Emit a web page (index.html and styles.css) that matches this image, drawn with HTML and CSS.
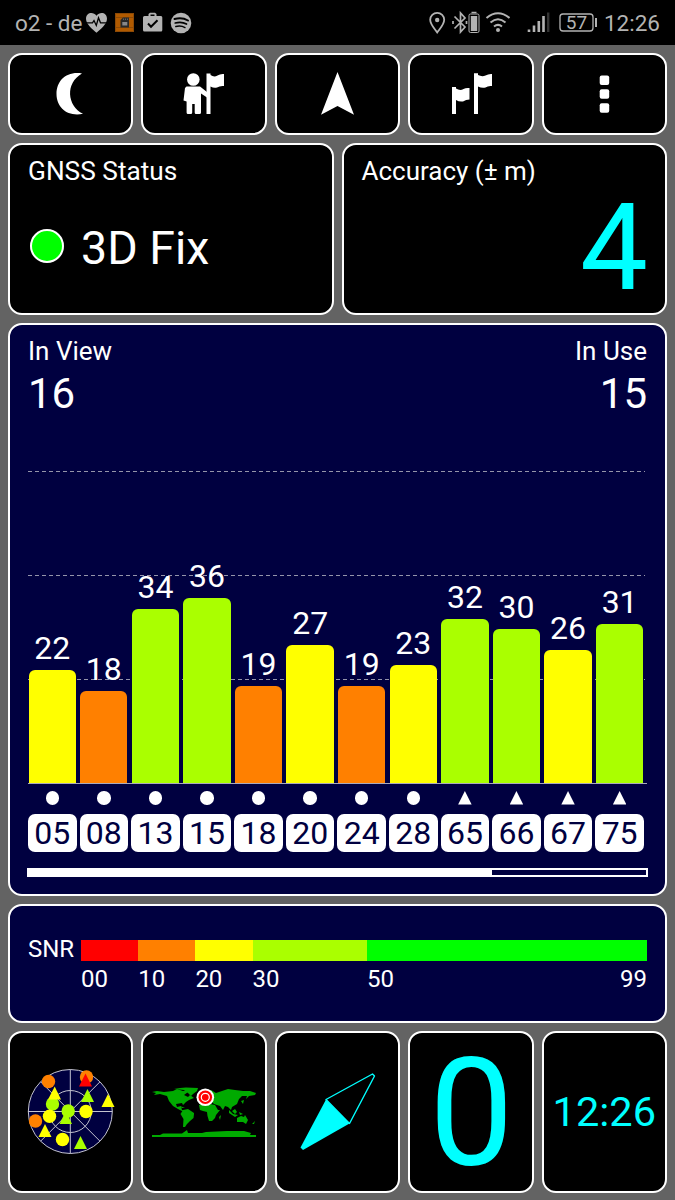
FILE: index.html
```html
<!DOCTYPE html>
<html lang="en">
<head>
<meta charset="utf-8">
<title>GNSS Status</title>
<link rel="stylesheet" href="styles.css">
</head>
<body>
<header class="status">
  <span class="carrier">o2 - de</span>
  <svg class="status-left" width="110" height="28" viewBox="0 0 110 28" fill="#b3b3b3">
    <path d="M10.5 23.800C7 20.500 0 15.500 0 9.800C0 3.500 7.200 2.300 10.500 6.800C13.800 2.300 21 3.500 21 9.800C21 15.500 14 20.500 10.500 23.800Z"/>
    <path d="M0 13.800H6.500L8 11.500L10.300 16.500L12.500 8.800L14.500 13.800H21" fill="none" stroke="#000" stroke-width="1.300"/>
    <rect x="29.500" y="4.500" width="18" height="18" fill="#b05a00" stroke="#8d4a06"/>
    <path d="M29 8.500H48M29 18.500H48" stroke="#8d4a06"/>
    <path d="M34.500 11L37 8.500H43V18.500H34.500Z" fill="#292929"/>
    <path d="M37.500 9.500V11M39.500 9.500V11M41.500 9.500V11" stroke="#777" stroke-width=".7"/>
    <rect x="36.300" y="13" width="5" height="3.500" fill="#888"/>
    <path fill-rule="evenodd" d="M57 8.500Q57 7 58.500 7H62.500V5L64 3.800H69L70.500 5V7H75Q76.300 7 76.300 8.500V21Q76.300 22.500 75 22.500H58.500Q57 22.500 57 21ZM64.500 5.500V7H68.500V5.500Z"/>
    <path d="M62 14.500L65 17.700L71.500 11.200" fill="none" stroke="#000" stroke-width="2"/>
    <circle cx="95" cy="14" r="10.300"/>
    <g fill="none" stroke="#000" stroke-linecap="round"><path d="M88.500 10Q96 7.800 102 11.500" stroke-width="2"/><path d="M89.200 14Q95.500 12.200 100.500 15" stroke-width="1.700"/><path d="M89.800 17.500Q95 16.200 99 18.600" stroke-width="1.400"/></g>
  </svg>
  <svg class="status-right" width="175" height="28" viewBox="0 0 175 28" fill="none" stroke="#b3b3b3">
    <path d="M8.200 23.500C5.500 19.500 1.200 15.500 1.200 10.800A7 7 0 0 1 15.200 10.800C15.200 15.500 11 19.500 8.200 23.500Z" stroke-width="1.800"/>
    <circle cx="8.200" cy="11" r="2.200" fill="#b3b3b3" stroke="none"/>
    <path d="M25.500 7.500L36 18L31.500 23V4L36 9L25.500 19.500M24 12V15M37.500 12V15" stroke-width="1.700"/>
    <rect x="40" y="5" width="10" height="18.500" rx="1.500"/><path d="M42.500 3.500H47.500" stroke-width="1.500"/><rect x="41.800" y="7" width="6.400" height="15" fill="#b3b3b3" stroke="none"/>
    <path d="M57.500 9Q69 -.5 80.500 9M61.500 13.500Q69 7 76.500 13.500M65 17.500Q69 14.300 73 17.500" stroke-width="2"/><circle cx="69" cy="21" r="2" fill="#b3b3b3" stroke="none"/>
    <path d="M100 20.500V23M105 16.500V23M109.800 12V23M114.500 7V23" stroke-width="2.600"/><path d="M119.200 3.500V23" stroke-width="2.400" stroke="#333"/>
    <rect x="131" y="5" width="33" height="17" rx="3" stroke-width="1.300"/><path d="M167 9V18" stroke-width="2"/>
    <text x="147.500" y="20" class="battery">57</text>
  </svg>
  <span class="clock">12:26</span>
</header>
<main class="app">
  <nav class="row toolbar">
    <div class="card"><svg width="125" height="82" viewBox="8 53 125 82"><path d="M82 73.500C66 71 56.500 81 56.500 94C56.500 108 68 117 83 113.800C67 106 65 83 82 73.500Z"/></svg></div>
    <div class="card"><svg width="125" height="82" viewBox="141 53 125 82"><circle cx="193.300" cy="79.500" r="6.300"/><path d="M186.500 86.500H200L207 92V97.500L201 93.500V112.500Q201 114 199.500 114H196Q194.700 114 194.700 112.500V104H192.200V112.500Q192.200 114 190.800 114H188Q186.600 114 186.600 112.500V101.500L183.500 100.500L185 88Z"/><path d="M206.500 73.500H210.500V75Q214 77.500 217.500 75.500Q220.500 73.500 224 74V86Q220 85.500 217 87.500Q214 88.500 210.500 86.500V114H206.500Z"/></svg></div>
    <div class="card"><svg width="125" height="82" viewBox="275 53 125 82"><path d="M337.500 72L354 114.800L337.500 106L321 114.800Z"/></svg></div>
    <div class="card"><svg width="125" height="82" viewBox="408 53 125 82"><path d="M452 87H456V88.500Q460 91 463.500 89Q466 87.500 469.500 88V99.500Q466 99.500 463 101.500Q459 102 456 100V114H452ZM474 73.200H478V75Q482 77 485.500 75.500Q488.500 73.700 492 74V86Q488 85.500 485.500 87.500Q482 88.500 478 86.500V114H474Z"/></svg></div>
    <div class="card"><svg width="125" height="82" viewBox="542 53 125 82"><rect x="599.700" y="75.500" width="9.500" height="9.500" rx="2"/><rect x="599.700" y="89.300" width="9.500" height="9.500" rx="2"/><rect x="599.700" y="103.300" width="9.500" height="9.500" rx="2"/></svg></div>
  </nav>
  <section class="row summary">
    <div class="card"><h2 class="wide">GNSS Status</h2><div class="fix"><i class="lamp"></i><span>3D Fix</span></div></div>
    <div class="card"><h2>Accuracy (± m)</h2><div class="accuracy">4</div></div>
  </section>
  <section class="card satellites">
    <div class="counts"><div><h2>In View</h2><b>16</b></div><div class="right"><h2>In Use</h2><b>15</b></div></div>
    <div class="chart">
      <svg class="grid" width="619" height="314" viewBox="0 0 619 314"><path d="M0 1.500H617M0 105.500H617M0 209.500H617"/></svg>
      <div class="col"><span>22</span><i class="bar yellow" style="height:112.300px"></i></div>
      <div class="col"><span>18</span><i class="bar orange" style="height:91.700px"></i></div>
      <div class="col"><span>34</span><i class="bar lime" style="height:173.800px"></i></div>
      <div class="col"><span>36</span><i class="bar lime" style="height:184.100px"></i></div>
      <div class="col"><span>19</span><i class="bar orange" style="height:96.800px"></i></div>
      <div class="col"><span>27</span><i class="bar yellow" style="height:137.900px"></i></div>
      <div class="col"><span>19</span><i class="bar orange" style="height:96.800px"></i></div>
      <div class="col"><span>23</span><i class="bar yellow" style="height:117.300px"></i></div>
      <div class="col"><span>32</span><i class="bar lime" style="height:163.600px"></i></div>
      <div class="col"><span>30</span><i class="bar lime" style="height:153.300px"></i></div>
      <div class="col"><span>26</span><i class="bar yellow" style="height:132.800px"></i></div>
      <div class="col"><span>31</span><i class="bar lime" style="height:158.500px"></i></div>
    </div>
    <div class="ids">
      <div><i class="dot"></i><b>05</b></div><div><i class="dot"></i><b>08</b></div><div><i class="dot"></i><b>13</b></div><div><i class="dot"></i><b>15</b></div><div><i class="dot"></i><b>18</b></div><div><i class="dot"></i><b>20</b></div><div><i class="dot"></i><b>24</b></div><div><i class="dot"></i><b>28</b></div><div><i class="tri"></i><b>65</b></div><div><i class="tri"></i><b>66</b></div><div><i class="tri"></i><b>67</b></div><div><i class="tri"></i><b>75</b></div>
    </div>
    <div class="scroll"><i style="width:75%"></i></div>
  </section>
  <section class="card snr">
    <span class="snr-name">SNR</span>
    <div class="scale">
      <div><i class="red"></i>00</div><div><i class="orange"></i>10</div><div><i class="yellow"></i>20</div><div><i class="lime"></i>30</div><div><i class="green"></i><p><span>50</span><span>99</span></p></div>
    </div>
  </section>
  <nav class="row pages">
    <div class="card"><svg width="125" height="161" viewBox="8 1031 125 161">
      <circle cx="70.300" cy="1111.500" r="42" fill="#000040"/>
      <g fill="none" stroke="#c4c4d0"><circle cx="70.300" cy="1111.500" r="42"/><circle cx="70.300" cy="1111.500" r="21"/><path d="M28 1111.500H112.500M70.300 1069.500V1153.500M40.600 1081.800L100 1141.200M100 1081.800L40.600 1141.200"/></g>
      <g fill="#ff8000"><circle cx="48.500" cy="1081.500" r="6.700"/><circle cx="86.500" cy="1077" r="6.700"/><circle cx="35.500" cy="1121" r="6.700"/></g>
      <g fill="#af0"><circle cx="52.500" cy="1104" r="6.700"/><path d="M87.500 1089L94 1102H81Z"/><path d="M80.500 1136L87 1149H74Z"/><path d="M65.800 1111L72 1124H59.500Z"/><circle cx="68.200" cy="1111" r="6.700"/></g>
      <g fill="#ff0"><circle cx="49.500" cy="1116.300" r="6.700"/><circle cx="86" cy="1111.500" r="6.700"/><circle cx="62.500" cy="1139.500" r="6.700"/><path d="M54.700 1086.500L61 1099.500H48Z"/><path d="M45 1124L51.500 1137H38.500Z"/><path d="M108 1094L114.500 1107H101.500Z"/></g>
      <path d="M85.500 1073.500L92 1086.500H79Z" fill="#f00"/>
    </svg></div>
    <div class="card"><svg width="125" height="161" viewBox="141 1031 125 161">
      <g fill="#0a0">
        <path d="M152 1092L157 1091L164 1092L173 1091L177 1089L183 1091L187 1090L188 1092L184 1095L188 1097L190 1095L194 1098L189 1100L186 1102L183 1105L182 1103L176 1104L177 1107L181 1106L182 1110L186 1111L184 1112L178 1109L173 1106L169 1101L167 1096L160 1094L154 1095L156 1093Z"/>
        <path d="M174 1089L180 1088L186 1087.500L198 1088L197 1091L193 1094L191 1096L188 1093L184 1090Z"/>
        <path d="M183 1110L188 1109L194 1113L194 1114L193.500 1118L190 1121L187 1124L185 1127L183 1127L183.500 1119L180.500 1114Z"/>
        <path d="M199 1105L203 1103L210 1104L215 1105L218 1110L220 1110L216 1115L215 1118L212 1121L209 1121L207.500 1116L207 1112L203 1111L200 1110Z"/>
        <path d="M198 1102L201 1096L206 1092L211 1090L216 1093L222 1091L228 1089L235 1090L243 1091L250 1091L256 1093L255 1095L249 1096L246 1099L247 1096L242 1096L239 1099L237 1104L232 1107L231 1110L228 1107L225 1106L223 1110L220 1106L214 1104L211 1101L204 1101Z"/>
        <path d="M219 1117L221 1115L220 1120ZM237 1118L241 1116L244 1117L245 1115L248 1120L246 1124L243 1122L237 1122Z"/>
        <path d="M229 1110L233 1114L238 1115L235 1117L229 1113ZM235 1109L237 1112L235 1114L232 1111ZM239 1112L243 1114L240 1115ZM241 1101L244 1100L243 1104ZM252 1124L255 1121L254 1124ZM180 1106L185 1108L182 1108Z"/>
        <path d="M152 1135H160L163 1133.500H182L187 1130L188 1133L202 1133L206 1132L227 1131L244 1131L251 1133L250 1135H256V1137H152Z"/>
      </g>
      <circle cx="205.300" cy="1097.300" r="8.800" fill="#fff"/><circle cx="205.300" cy="1097.300" r="6.800" fill="#f00"/><circle cx="205.300" cy="1097.300" r="4" fill="#f00" stroke="#fff" stroke-width="1.200"/>
    </svg></div>
    <div class="card"><svg width="125" height="161" viewBox="275 1031 125 161"><path d="M326 1099.500L349.500 1123.500L303 1150L300.500 1147.500Z" fill="#0ff"/><path d="M326 1099.500L372.500 1074L374.500 1076L349.500 1123.500Z" fill="none" stroke="#0ff" stroke-width="1.400" stroke-linejoin="round"/></svg></div>
    <div class="card big">0</div>
    <div class="card time">12:26</div>
  </nav>
</main>
</body>
</html>
```

FILE: styles.css
```css
* { box-sizing: border-box; }
body { margin: 0; width: 675px; height: 1200px; overflow: hidden; background: #636363; color: #fff; font-family: Roboto, sans-serif; }
h2, b, p { margin: 0; font-weight: 400; }
svg, i { display: block; flex: none; }

.status { display: flex; align-items: center; height: 45px; background: #000; padding: 0 15px 0 15px; color: #b3b3b3; font-size: 22.500px; }
.carrier { width: 71px; white-space: nowrap; line-height: 46px; }
.status-right { margin: 1px 0 0 auto; }
.battery { font: 19px Roboto, sans-serif; fill: #b3b3b3; stroke: none; text-anchor: middle; }
.clock { line-height: 46px; }

.app { display: flex; flex-direction: column; gap: 8px; padding: 7.500px 8px; }
.row { display: grid; grid-template-rows: 100%; grid-auto-flow: column; grid-auto-columns: minmax(0, 1fr); gap: 8px; }
.card { min-width: 0; border: 2px solid #fff; border-radius: 14px; background: #000; }
.card > svg { margin: -2px; fill: #fff; }
.toolbar { height: 82px; }
.summary { height: 172px; }
h2 { font-size: 26px; line-height: 30px; }
.wide { font-size: 26.250px; }
.summary .card { padding: 11px 18px 0; }
.fix { display: flex; align-items: center; gap: 17px; margin-top: 34px; padding-left: 2px; font-size: 46.500px; line-height: 56px; }
.lamp { width: 34px; height: 34px; border: 2px solid #fff; border-radius: 50%; background: #0f0; margin-top: -4px; }
.accuracy { color: #0ff; font-size: 121px; line-height: 120px; text-align: right; margin: 2px -1px 0 0; }

.satellites { flex: none; height: 573.500px; background: #000040; padding: 11px 17px 0 18px; }
.counts { display: flex; justify-content: space-between; height: 134px; }
.counts b { display: block; font-size: 42px; line-height: 50px; margin-top: 3px; }
.right { text-align: right; padding-right: 1px; }
.chart { position: relative; display: grid; grid-template-columns: repeat(12, 51.580px); width: 619px; height: 314px; border-bottom: 1px solid #aaaabc; }
.grid { position: absolute; left: 0; top: 0; fill: none; stroke: #9494aa; stroke-width: 1; stroke-dasharray: 4 3; }
.col { position: relative; display: flex; flex-direction: column; justify-content: flex-end; width: 48.500px; text-align: center; font-size: 32px; line-height: 38px; }
.col span { margin-bottom: 3px; }
.bar { width: 47.300px; margin-left: .6px; border-radius: 6px 6px 0 0; }
.red { background: #f00; }
.orange { background: #ff8000; }
.yellow { background: #ff0; }
.lime { background: #af0; }
.green { background: #0f0; }
.ids { display: grid; grid-template-columns: repeat(12, 51.580px); padding-top: 7.500px; }
.ids div { width: 48.500px; display: flex; flex-direction: column; align-items: center; gap: 9px; }
.ids b { width: 100%; height: 38px; border-radius: 7px; background: #fff; color: #000040; font-size: 32px; line-height: 38px; text-align: center; }
.dot { width: 13.500px; height: 13.500px; border-radius: 50%; background: #fff; }
.tri { width: 13.500px; height: 13.500px; background: #fff; clip-path: polygon(50% 0, 100% 100%, 0 100%); }
.scroll { width: 621px; height: 9px; margin: 16px 0 0 -1px; border: 2px solid #fff; }
.scroll i { height: 100%; background: #fff; }

.snr { flex: none; display: flex; height: 119px; background: #000040; padding: 34px 18px; font-size: 24px; }
.snr-name { width: 53px; line-height: 19px; }
.scale { display: grid; grid-template-columns: 57.200px 57.200px 57.200px 114.400px 1fr; flex: 1; }
.scale i { height: 21px; margin-bottom: 4px; }
.scale p { display: flex; justify-content: space-between; }
.pages { height: 161.500px; }
.big { display: flex; align-items: center; justify-content: center; padding: 5px 0 0 1px; color: #0ff; font-size: 150px; line-height: 152px; }
.time { display: flex; align-items: center; justify-content: center; color: #0ff; font-size: 41.500px; }
```
